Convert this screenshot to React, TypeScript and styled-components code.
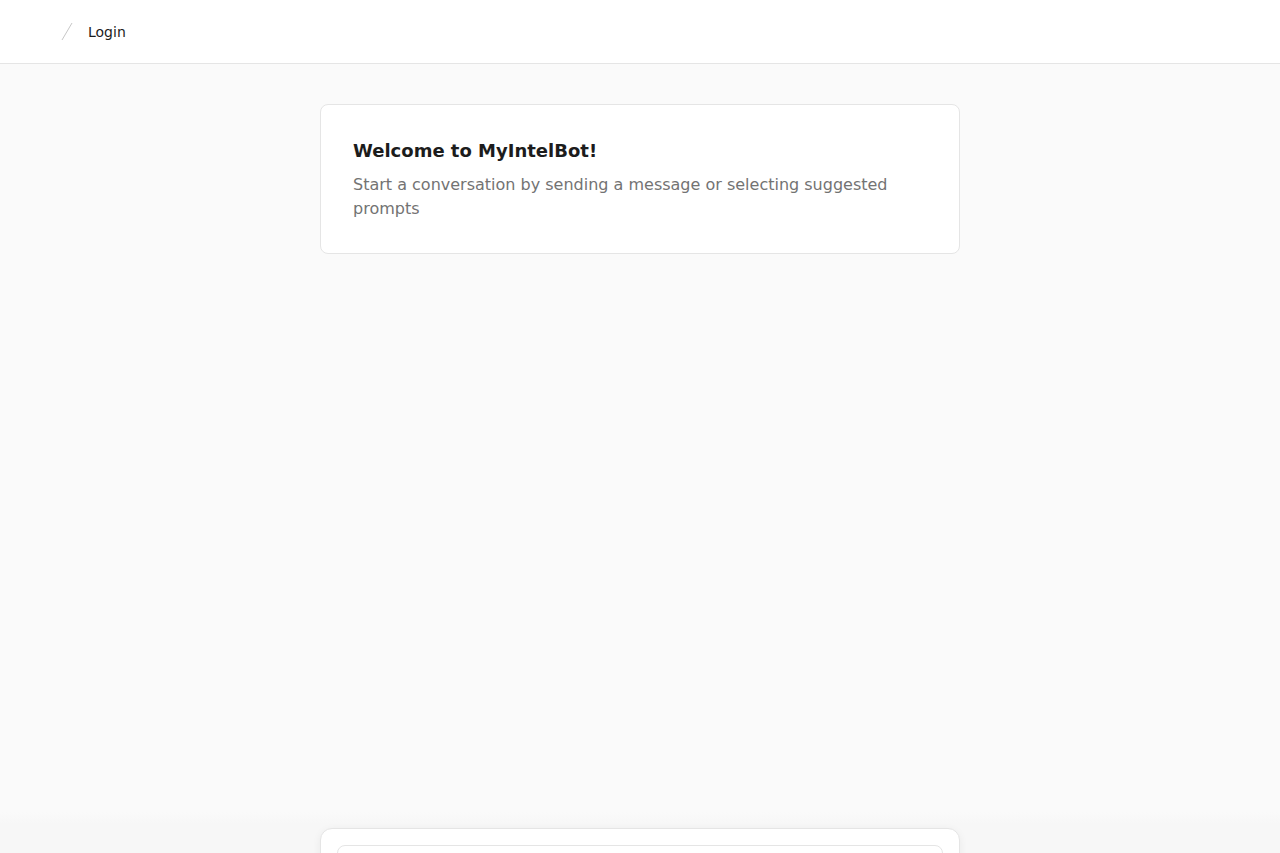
import React from "react";
import styled, { createGlobalStyle } from "styled-components";

const GlobalStyle = createGlobalStyle`
  html, body { margin: 0; padding: 0; height: 100%; }
  body {
    font-family: "DejaVu Sans", "Noto Sans", sans-serif;
    background: #fafafa;
    color: #171717;
  }
  #root { height: 100%; }
  * { box-sizing: border-box; }
`;

const Page = styled.div`
  height: 853px;
  display: flex;
  flex-direction: column;
  overflow: hidden;
  background: #fafafa;
`;

const Header = styled.header`
  height: 64px;
  flex-shrink: 0;
  background: #ffffff;
  border-bottom: 1px solid #e5e5e5;
  display: flex;
  align-items: center;
  padding-left: 60px;
  gap: 14px;
`;

const Crumb = styled.span`
  font-size: 14px;
  color: #1c1c1c;
  line-height: 20px;
`;

const Main = styled.main`
  flex: 1;
  display: flex;
  flex-direction: column;
  min-height: 0;
`;

const Messages = styled.div`
  flex: 1;
  padding-top: 40px;
  display: flex;
  flex-direction: column;
  align-items: center;
`;

const WelcomeCard = styled.section`
  width: 640px;
  background: #ffffff;
  border: 1px solid #e5e5e5;
  border-radius: 8px;
  padding: 32px;
`;

const Title = styled.h1`
  margin: 0;
  font-size: 18px;
  line-height: 28px;
  font-weight: 700;
  color: #1c1c1c;
`;

const Subtitle = styled.p`
  margin: 8px 0 0;
  font-size: 16px;
  line-height: 24px;
  color: #737373;
`;

const Composer = styled.div`
  height: 41px;
  flex-shrink: 0;
  background: linear-gradient(to bottom, #fafafa 0px, #f7f7f7 12px, #f7f7f7 100%);
  padding-top: 16px;
  display: flex;
  justify-content: center;
`;

const ComposerCard = styled.div`
  width: 640px;
  height: 120px;
  background: #ffffff;
  border: 1px solid #e5e5e5;
  border-radius: 12px;
  box-shadow: 0 2px 8px rgba(0, 0, 0, 0.06);
  padding: 16px;
`;

const InputBox = styled.div`
  height: 80px;
  border: 1px solid #e5e5e5;
  border-radius: 8px;
  background: #ffffff;
`;

const Slash = () => (
  <svg width="14" height="20" viewBox="0 0 14 20" aria-hidden>
    <line x1="2" y1="18" x2="12" y2="1" stroke="#c7c7c7" strokeWidth="1" />
  </svg>
);

export default function App() {
  return (
    <>
      <GlobalStyle />
      <Page>
        <Header>
          <Slash />
          <Crumb>Login</Crumb>
        </Header>
        <Main>
          <Messages>
            <WelcomeCard>
              <Title>Welcome to MyIntelBot!</Title>
              <Subtitle>
                Start a conversation by sending a message or selecting suggested prompts
              </Subtitle>
            </WelcomeCard>
          </Messages>
          <Composer>
            <ComposerCard>
              <InputBox />
            </ComposerCard>
          </Composer>
        </Main>
      </Page>
    </>
  );
}
